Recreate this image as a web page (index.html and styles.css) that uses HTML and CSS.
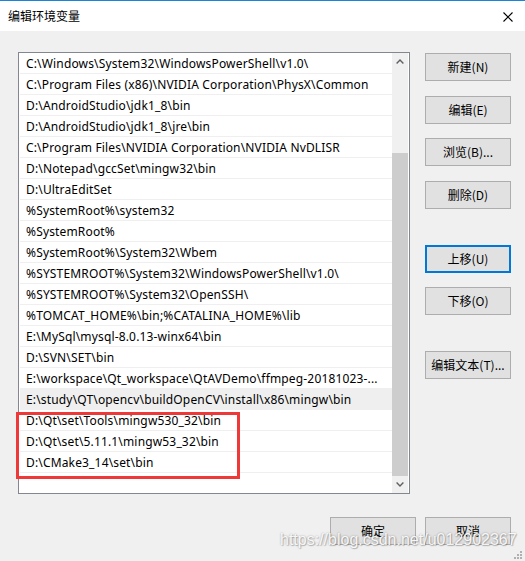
FILE: index.html
```html
<!DOCTYPE html>
<html lang="zh-CN">
<head>
<meta charset="utf-8">
<title>编辑环境变量</title>
<link rel="stylesheet" href="styles.css">
</head>
<body>
<div class="window">
  <div class="titlebar">
    <span class="title">编辑环境变量</span>
    <svg class="close" width="10" height="10" viewBox="0 0 10 10"><path d="M0.5 0.5 L9.5 9.5 M9.5 0.5 L0.5 9.5" stroke="#000" stroke-width="1.1" fill="none"/></svg>
  </div>
  <div class="content">
    <div class="main">
      <div class="listbox">
        <div class="rows">
          <div class="row">C:\Windows\System32\WindowsPowerShell\v1.0\</div>
          <div class="row">C:\Program Files (x86)\NVIDIA Corporation\PhysX\Common</div>
          <div class="row">D:\AndroidStudio\jdk1_8\bin</div>
          <div class="row">D:\AndroidStudio\jdk1_8\jre\bin</div>
          <div class="row">C:\Program Files\NVIDIA Corporation\NVIDIA NvDLISR</div>
          <div class="row">D:\Notepad\gccSet\mingw32\bin</div>
          <div class="row">D:\UltraEditSet</div>
          <div class="row">%SystemRoot%\system32</div>
          <div class="row">%SystemRoot%</div>
          <div class="row">%SystemRoot%\System32\Wbem</div>
          <div class="row">%SYSTEMROOT%\System32\WindowsPowerShell\v1.0\</div>
          <div class="row">%SYSTEMROOT%\System32\OpenSSH\</div>
          <div class="row">%TOMCAT_HOME%\bin;%CATALINA_HOME%\lib</div>
          <div class="row">E:\MySql\mysql-8.0.13-winx64\bin</div>
          <div class="row">D:\SVN\SET\bin</div>
          <div class="row">E:\workspace\Qt_workspace\QtAVDemo\ffmpeg-20181023-...</div>
          <div class="row selected">E:\study\QT\opencv\buildOpenCV\install\x86\mingw\bin</div>
          <div class="row">D:\Qt\set\Tools\mingw530_32\bin</div>
          <div class="row">D:\Qt\set\5.11.1\mingw53_32\bin</div>
          <div class="row">D:\CMake3_14\set\bin</div>
        </div>
        <div class="scrollbar">
          <div class="sb-btn">
            <svg width="8" height="5" viewBox="0 0 8 5"><path d="M0.6 4.4 L4 1 L7.4 4.4" stroke="#606060" stroke-width="1.4" fill="none"/></svg>
          </div>
          <div class="sb-track"><div class="sb-thumb"></div></div>
          <div class="sb-btn">
            <svg width="8" height="5" viewBox="0 0 8 5"><path d="M0.6 0.6 L4 4 L7.4 0.6" stroke="#606060" stroke-width="1.4" fill="none"/></svg>
          </div>
        </div>
      </div>
      <div class="side">
        <button class="btn">新建(N)</button>
        <button class="btn g15">编辑(E)</button>
        <button class="btn g14">浏览(B)...</button>
        <button class="btn g15">删除(D)</button>
        <button class="btn g36 focused">上移(U)</button>
        <button class="btn g14">下移(O)</button>
        <button class="btn g36">编辑文本(T)...</button>
      </div>
    </div>
    <div class="footer">
      <button class="btn">确定</button>
      <button class="btn">取消</button>
    </div>
  </div>
  <div class="highlight"></div>
  <div class="watermark">https://blog.csdn.net/u012902367</div>
  <svg class="grip" width="8" height="8" viewBox="0 0 8 8">
    <rect x="6" y="0" width="2" height="2" fill="#b0b0b0"/>
    <rect x="3" y="3" width="2" height="2" fill="#b0b0b0"/>
    <rect x="6" y="3" width="2" height="2" fill="#b0b0b0"/>
    <rect x="0" y="6" width="2" height="2" fill="#b0b0b0"/>
    <rect x="3" y="6" width="2" height="2" fill="#b0b0b0"/>
    <rect x="6" y="6" width="2" height="2" fill="#b0b0b0"/>
  </svg>
</div>
</body>
</html>
```

FILE: styles.css
```css
* { box-sizing: border-box; }
html, body { margin: 0; padding: 0; }
body {
  font-family: "Noto Sans", "Noto Sans CJK SC", sans-serif;
  font-size: 12px;
  color: #000;
  background: #f0f0f0;
}
.window {
  position: relative;
  width: 525px;
  height: 561px;
  background: #f0f0f0;
  overflow: hidden;
}
.titlebar {
  height: 31px;
  border-top: 1px solid #1a84d8;
  background: #fff;
  display: flex;
  align-items: center;
  justify-content: space-between;
  padding: 0 12px 0 8px;
}
.title {
  font-family: "Noto Sans CJK SC", sans-serif;
  font-size: 12px;
  line-height: 14px;
}
.close { display: block; margin-top: 1px; }
.content {
  padding: 21px 0 0 18px;
}
.main {
  display: flex;
  align-items: flex-start;
}
.listbox {
  width: 392px;
  height: 442px;
  border: 1px solid #828790;
  background: #fff;
  display: flex;
}
.rows {
  flex: 1;
  padding-left: 1px;
}
.row {
  height: 21px;
  line-height: 19px;
  padding-top: 1px;
  border-bottom: 1px solid #efefef;
  padding-left: 6px;
  white-space: nowrap;
  overflow: hidden;
  font-family: "Noto Sans", "Noto Sans CJK SC", sans-serif;
  font-size: 12px;
  letter-spacing: 0.16px;
}
.row.selected { background: #efefef; }
.scrollbar {
  width: 16px;
  margin-right: 1px;
  background: #f0f0f0;
  display: flex;
  flex-direction: column;
}
.sb-btn {
  height: 17px;
  display: flex;
  align-items: center;
  justify-content: center;
}
.sb-track {
  flex: 1;
  display: flex;
  flex-direction: column;
  justify-content: flex-end;
}
.sb-thumb {
  height: 323px;
  background: #cdcdcd;
}
.side {
  margin-left: 15px;
  padding-top: 1px;
  display: flex;
  flex-direction: column;
}
.btn {
  width: 86px;
  height: 28px;
  background: #e1e1e1;
  border: 1px solid #adadad;
  font-family: "Noto Sans CJK SC", sans-serif;
  font-size: 12px;
  color: #000;
  padding: 0;
  margin: 0;
  line-height: 14px;
}
.btn.focused { border: 2px solid #0078d7; }
.g14 { margin-top: 14px; }
.g15 { margin-top: 15px; }
.g36 { margin-top: 36px; }
.footer {
  display: flex;
  justify-content: flex-end;
  gap: 9px;
  padding-right: 14px;
  margin-top: 23px;
}
.highlight {
  position: absolute;
  left: 16px;
  top: 412px;
  width: 224px;
  height: 67px;
  border: 3px solid #ef3838;
}
.watermark {
  position: absolute;
  left: 280px;
  top: 531px;
  font-family: "Liberation Sans", Arial, sans-serif;
  font-size: 16px;
  color: rgba(255,255,255,0.92);
  text-shadow: 0 0 2px rgba(0,0,0,0.35), 1px 1px 1px rgba(0,0,0,0.2);
  white-space: nowrap;
}
.grip {
  position: absolute;
  right: 3px;
  bottom: 2px;
}
```
